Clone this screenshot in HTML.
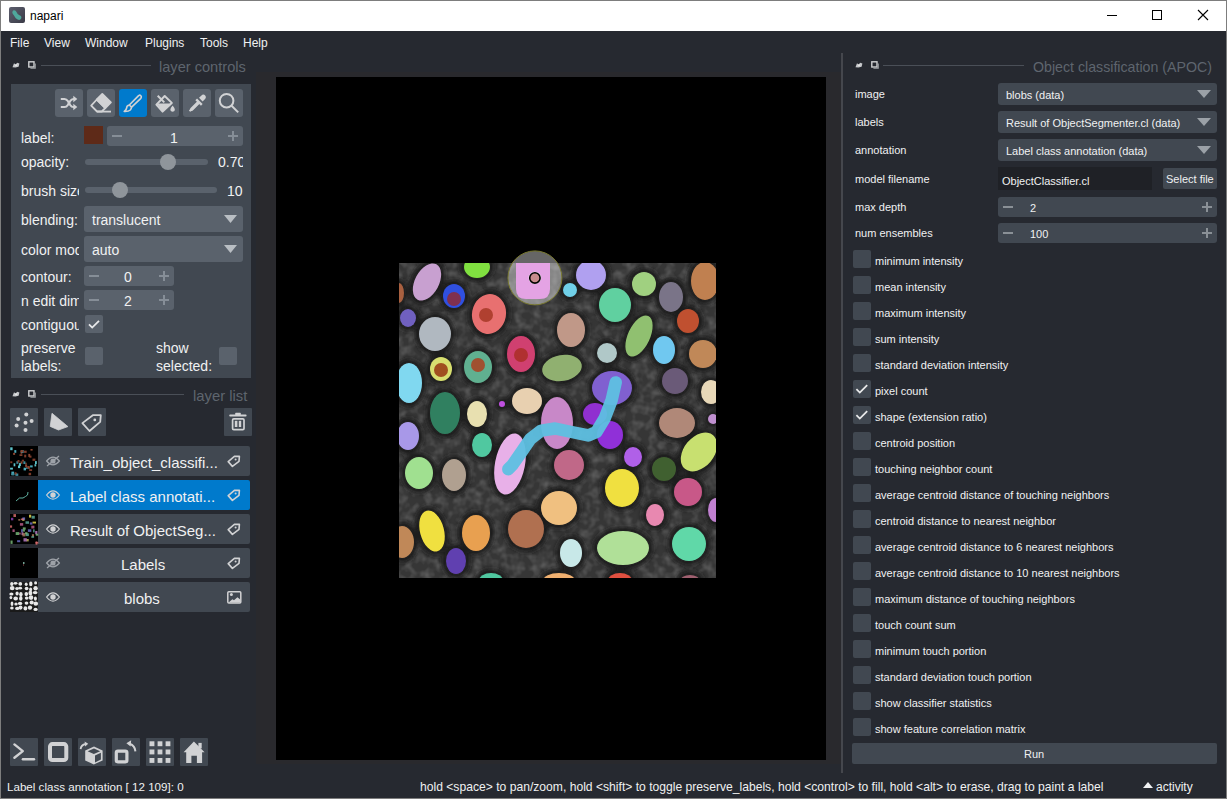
<!DOCTYPE html>
<html><head><meta charset="utf-8">
<style>
*{box-sizing:border-box;margin:0;padding:0}
html,body{width:1227px;height:799px;overflow:hidden;background:#262930;font-family:"Liberation Sans",sans-serif;color:#f0f1f2}
.a{position:absolute}
.t{position:absolute;white-space:pre;line-height:1}
svg{position:absolute;overflow:visible}
.btn{position:absolute;background:#5a626c;border-radius:3px}
.cb{position:absolute;width:18px;height:18px;background:#414851;border-radius:2px}
.sp{position:absolute;background:#5a626c;border-radius:3px}
.fg{background:#414851}
.btn.fg{border-radius:1px}
.lbl{font-size:14px}
.r11{font-size:11px}
</style></head><body>
<!-- window border -->
<div class="a" style="left:0;top:0;width:1227px;height:799px;border:1px solid #7d7d7d"></div>
<!-- title bar -->
<div class="a" style="left:1px;top:1px;width:1225px;height:30px;background:#fff"></div>
<svg style="left:9px;top:7px" width="16" height="16" viewBox="0 0 16 16"><defs><linearGradient id="lg" x1="0" y1="0" x2="1" y2="1"><stop offset="0" stop-color="#5d5f6e"/><stop offset="1" stop-color="#3a3b47"/></linearGradient></defs>
<rect width="16" height="16" rx="2" fill="url(#lg)"/><path d="M4 3.5Q6.5 2.5 7.5 5Q8.3 7.4 10.5 8.2Q13 9.2 12.2 11.6Q11.2 13.6 8.6 12.6Q6.4 11.8 5.6 9.6Q5 8.2 3.8 7Q2.6 5 4 3.5Z" fill="#4fa89c"/></svg>
<div class="t" style="left:30px;top:10px;font-size:12px;color:#000">napari</div>
<div class="a" style="left:1107px;top:15px;width:10px;height:1px;background:#000"></div>
<div class="a" style="left:1152px;top:10px;width:10px;height:10px;border:1px solid #000"></div>
<svg style="left:1198px;top:10px" width="10" height="10"><path d="M0 0L10 10M10 0L0 10" stroke="#000" stroke-width="1.1"/></svg>

<!-- menu -->
<div class="t" style="left:10px;top:37px;font-size:12px">File</div>
<div class="t" style="left:44px;top:37px;font-size:12px">View</div>
<div class="t" style="left:85px;top:37px;font-size:12px">Window</div>
<div class="t" style="left:145px;top:37px;font-size:12px">Plugins</div>
<div class="t" style="left:200px;top:37px;font-size:12px">Tools</div>
<div class="t" style="left:243px;top:37px;font-size:12px">Help</div>

<!-- LEFT DOCK: layer controls title -->
<svg style="left:12px;top:62px" width="8" height="6" viewBox="0 0 8 6"><path d="M0.5 5.2L2 1.2L3.6 2.6L5.2 0.8L7.4 1.6L6.6 4.8L3.4 5.4Z" fill="#c6c8cb"/><circle cx="4" cy="3.2" r="1" fill="#e8e8e8"/></svg>
<svg style="left:28px;top:61px" width="8" height="8" viewBox="0 0 8 8"><rect x="0.8" y="0.8" width="5.2" height="5.2" fill="none" stroke="#cfd0d2" stroke-width="1.4"/><path d="M7.2 2.4V7.2H2.4" fill="none" stroke="#9fa2a6" stroke-width="1.2"/></svg>
<svg style="left:12px;top:391px" width="8" height="6" viewBox="0 0 8 6"><path d="M0.5 5.2L2 1.2L3.6 2.6L5.2 0.8L7.4 1.6L6.6 4.8L3.4 5.4Z" fill="#c6c8cb"/><circle cx="4" cy="3.2" r="1" fill="#e8e8e8"/></svg>
<svg style="left:28px;top:390px" width="8" height="8" viewBox="0 0 8 8"><rect x="0.8" y="0.8" width="5.2" height="5.2" fill="none" stroke="#cfd0d2" stroke-width="1.4"/><path d="M7.2 2.4V7.2H2.4" fill="none" stroke="#9fa2a6" stroke-width="1.2"/></svg>

<div class="a" style="left:41px;top:65px;width:110px;height:1px;background:#4a4f57"></div>
<div class="t" style="left:159px;top:60px;font-size:14.6px;color:#5e656e">layer controls</div>

<!-- layer controls panel -->
<div class="a" style="left:11px;top:84px;width:240px;height:294px;background:#414851"></div>
<div class="btn" style="left:55px;top:89px;width:28px;height:28px"></div>
<div class="btn" style="left:87px;top:89px;width:28px;height:28px"></div>
<div class="btn" style="left:119px;top:89px;width:28px;height:28px;background:#007acc"></div>
<div class="btn" style="left:151px;top:89px;width:28px;height:28px"></div>
<div class="btn" style="left:183px;top:89px;width:28px;height:28px"></div>
<div class="btn" style="left:215px;top:89px;width:28px;height:28px"></div>


<svg style="left:55px;top:89px" width="28" height="28" viewBox="0 0 28 28" fill="none" stroke="#d1d2d4" stroke-width="2.2" stroke-linecap="butt">
<path d="M5.8 10H9.5Q11.5 10 12.8 12L15.2 16Q16.5 18 18.5 18H20.5"/><path d="M5.8 18H9.5Q11.5 18 12.8 16L15.2 12Q16.5 10 18.5 10H20.5"/>
<path d="M18.3 6.8L22.3 10L18.3 13.2Z M18.3 14.8L22.3 18L18.3 21.2Z" fill="#d1d2d4" stroke="none"/></svg>
<svg style="left:87px;top:89px" width="28" height="28" viewBox="0 0 28 28" fill="none" stroke="#d1d2d4" stroke-width="1.8" stroke-linejoin="round">
<path d="M15.3 5L23.9 13.4L18.3 19L9.8 10.5Z" fill="#d1d2d4"/>
<path d="M9.8 10.5L18.3 19L14.8 22.5H10L4.2 16.6Z"/><path d="M10 22.6H24"/></svg>
<svg style="left:119px;top:89px" width="28" height="28" viewBox="0 0 28 28" fill="none" stroke="#d1d2d4" stroke-width="1.6" stroke-linejoin="round">
<path d="M19.6 6.6Q21.5 5.4 22.3 7.6Q22.5 8.6 21.6 9.6L12.6 18.2L10.3 16L19.6 6.6Z"/>
<path d="M10.3 16.2Q7.6 16.4 7.6 19.2Q7.4 21 5.2 22.4Q9.6 22.6 11.3 21Q12.6 19.6 12.4 18.2"/></svg>
<svg style="left:151px;top:89px" width="28" height="28" viewBox="0 0 28 28" fill="none" stroke="#d1d2d4" stroke-width="2" stroke-linejoin="round">
<path d="M6.7 6.8L13.3 13.4"/>
<path d="M13.7 7L20.8 13.9L11.6 22.6L5.4 15.6Z"/>
<path d="M5.6 14.6H20L11.6 22.6Z" fill="#d1d2d4" stroke="none"/>
<path d="M21.6 16.6Q24.2 19.6 23.9 21Q23.4 22.8 21.6 22.8Q19.8 22.8 19.3 21Q19 19.6 21.6 16.6Z" fill="#d1d2d4" stroke="none"/></svg>
<svg style="left:183px;top:89px" width="28" height="28" viewBox="0 0 28 28" fill="none" stroke="#d1d2d4" stroke-width="1.8" stroke-linejoin="round">
<path d="M18.2 6.8Q20.2 4.6 22.2 6.4Q23.8 8.2 21.6 10.4L19.6 12.4L16 8.8Z" fill="#d1d2d4" stroke="none"/>
<path d="M13.2 10.3L18.8 15.9" stroke-width="2.4"/>
<path d="M15.8 13.4L9.2 20L7.4 21.2L6.6 22.2M15.8 13.4" /><path d="M15.2 12.6L8.2 19.6L7.6 21.4L9.2 20.8L16.2 13.8"/></svg>
<svg style="left:215px;top:89px" width="28" height="28" viewBox="0 0 28 28" fill="none" stroke="#d1d2d4" stroke-width="2">
<circle cx="11.6" cy="11.7" r="6.8"/><path d="M16.6 16.8L23.2 23.4"/></svg>


<div class="t lbl" style="left:21px;top:131px">label:</div>
<div class="a" style="left:84px;top:126px;width:19px;height:18px;background:#5e2a18"></div>
<div class="sp" style="left:107px;top:126px;width:136px;height:20px"></div>
<div class="t lbl" style="left:170px;top:131px">1</div>

<div class="t lbl" style="left:21px;top:155px">opacity:</div>
<div class="a" style="left:85px;top:159px;width:123px;height:6px;background:#5a626c;border-radius:3px"></div>
<div class="a" style="left:160px;top:154px;width:16px;height:16px;background:#8f959b;border-radius:50%"></div>
<div class="t lbl" style="left:218px;top:155px;width:25px;overflow:hidden">0.70</div>

<div class="t lbl" style="left:21px;top:184px;width:58px;height:18px;overflow:hidden">brush size:</div>
<div class="a" style="left:85px;top:187px;width:132px;height:6px;background:#5a626c;border-radius:3px"></div>
<div class="a" style="left:112px;top:182px;width:16px;height:16px;background:#8f959b;border-radius:50%"></div>
<div class="t lbl" style="left:227px;top:184px">10</div>

<div class="t lbl" style="left:21px;top:213px">blending:</div>
<div class="sp" style="left:84px;top:206px;width:159px;height:26px"></div>
<div class="t lbl" style="left:92px;top:213px">translucent</div>

<div class="t lbl" style="left:21px;top:243px;width:58px;height:18px;overflow:hidden">color mode:</div>
<div class="sp" style="left:84px;top:236px;width:159px;height:26px"></div>
<div class="t lbl" style="left:92px;top:243px">auto</div>

<div class="t lbl" style="left:21px;top:270px">contour:</div>
<div class="sp" style="left:84px;top:266px;width:90px;height:20px"></div>
<div class="t lbl" style="left:124px;top:270px">0</div>

<div class="t lbl" style="left:21px;top:294px;width:58px;height:18px;overflow:hidden">n edit dim:</div>
<div class="sp" style="left:84px;top:290px;width:90px;height:20px"></div>
<div class="t lbl" style="left:124px;top:294px">2</div>

<div class="t lbl" style="left:21px;top:318px;width:58px;height:18px;overflow:hidden">contiguous:</div>
<div class="sp" style="left:85px;top:315px;width:18px;height:18px;border-radius:2px"></div>

<div class="t lbl" style="left:21px;top:341px">preserve</div>
<div class="t lbl" style="left:21px;top:359px">labels:</div>
<div class="sp" style="left:85px;top:347px;width:18px;height:18px;border-radius:2px"></div>
<div class="t lbl" style="left:156px;top:341px">show</div>
<div class="t lbl" style="left:156px;top:359px">selected:</div>
<div class="sp" style="left:219px;top:347px;width:18px;height:18px;border-radius:2px"></div>

<!-- layer list title -->
<div class="a" style="left:41px;top:394px;width:143px;height:1px;background:#4a4f57"></div>
<div class="t" style="left:193px;top:389px;font-size:14.8px;color:#5e656e">layer list</div>

<div class="btn fg" style="left:10px;top:408px;width:28px;height:28px"></div>
<div class="btn fg" style="left:44px;top:408px;width:28px;height:28px"></div>
<div class="btn fg" style="left:78px;top:408px;width:28px;height:28px"></div>
<div class="btn fg" style="left:224px;top:408px;width:28px;height:28px"></div>

<!-- layer rows -->
<div class="a" style="left:38px;top:446px;width:212px;height:30px;background:#414851;border-radius:0 2px 2px 0"></div>
<div class="a" style="left:38px;top:480px;width:212px;height:30px;background:#007acc;border-radius:0 2px 2px 0"></div>
<div class="a" style="left:38px;top:514px;width:212px;height:30px;background:#414851;border-radius:0 2px 2px 0"></div>
<div class="a" style="left:38px;top:548px;width:212px;height:30px;background:#414851;border-radius:0 2px 2px 0"></div>
<div class="a" style="left:38px;top:582px;width:212px;height:30px;background:#414851;border-radius:0 2px 2px 0"></div>
<svg style="left:10px;top:446px" width="28" height="30" viewBox="0 0 28 30"><rect width="28" height="30" fill="#000"/><rect x="16.2" y="20.8" width="1.5" height="2.2" fill="#3c8a9a"/><rect x="24.5" y="18.2" width="1.7" height="2.2" fill="#5cc0c8"/><rect x="6.4" y="15.2" width="1.9" height="2.6" fill="#3c8a9a"/><rect x="10.6" y="5.1" width="1.7" height="2.7" fill="#8a4530"/><rect x="3.6" y="17.3" width="1.7" height="3.0" fill="#5cc0c8"/><rect x="0.1" y="21.7" width="2.8" height="1.9" fill="#5cc0c8"/><rect x="25.0" y="15.1" width="1.8" height="3.0" fill="#5cc0c8"/><rect x="5.1" y="27.0" width="1.9" height="2.0" fill="#8a4530"/><rect x="4.3" y="4.1" width="2.0" height="2.7" fill="#4aa8b8"/><rect x="15.2" y="16.7" width="1.6" height="2.0" fill="#7a3a2a"/><rect x="8.0" y="19.5" width="2.2" height="2.6" fill="#5cc0c8"/><rect x="1.5" y="27.3" width="2.9" height="2.0" fill="#4aa8b8"/><rect x="10.5" y="15.4" width="2.0" height="2.4" fill="#8a4530"/><rect x="0.2" y="1.3" width="2.4" height="2.9" fill="#5cc0c8"/><rect x="3.1" y="6.9" width="2.0" height="2.0" fill="#8a4530"/><rect x="13.6" y="21.7" width="2.4" height="2.7" fill="#4aa8b8"/><rect x="9.5" y="8.3" width="2.9" height="1.6" fill="#8a4530"/><rect x="8.9" y="17.1" width="2.0" height="2.9" fill="#5cc0c8"/><rect x="14.2" y="8.7" width="2.0" height="2.7" fill="#7a3a2a"/><rect x="16.3" y="20.2" width="3.0" height="1.7" fill="#7a3a2a"/><rect x="1.3" y="27.6" width="2.9" height="1.5" fill="#3c8a9a"/><rect x="19.3" y="9.6" width="2.2" height="2.1" fill="#7a3a2a"/><rect x="1.4" y="25.6" width="2.7" height="2.0" fill="#4aa8b8"/><rect x="5.4" y="27.5" width="2.9" height="2.4" fill="#3c8a9a"/><rect x="20.5" y="3.0" width="2.1" height="1.6" fill="#8a4530"/><rect x="10.9" y="4.0" width="2.8" height="3.0" fill="#3c8a9a"/><rect x="11.8" y="13.7" width="2.2" height="1.9" fill="#7a3a2a"/><rect x="10.5" y="4.1" width="2.7" height="2.3" fill="#8a4530"/><rect x="4.7" y="26.2" width="1.8" height="2.2" fill="#7a3a2a"/><rect x="13.4" y="15.3" width="2.0" height="2.7" fill="#3c8a9a"/><rect x="20.1" y="19.4" width="2.6" height="2.0" fill="#4aa8b8"/><rect x="18.3" y="7.9" width="1.9" height="3.0" fill="#8a4530"/><rect x="18.6" y="26.8" width="2.5" height="2.4" fill="#7a3a2a"/><rect x="0.3" y="15.3" width="2.0" height="1.9" fill="#7a3a2a"/><rect x="7.5" y="14.0" width="2.0" height="2.5" fill="#7a3a2a"/><rect x="19.2" y="23.2" width="2.9" height="1.8" fill="#7a3a2a"/><rect x="22.5" y="12.6" width="2.9" height="2.3" fill="#7a3a2a"/><rect x="13.8" y="4.7" width="2.9" height="2.2" fill="#7a3a2a"/><rect x="18.0" y="20.2" width="1.8" height="2.7" fill="#8a4530"/><rect x="15.1" y="18.6" width="2.0" height="2.3" fill="#8a4530"/></svg>
<svg style="left:10px;top:480px" width="28" height="30" viewBox="0 0 28 30"><rect width="28" height="30" fill="#000"/><path d="M6 21L9.5 18H13L15.5 16.5L17.5 15L18 12" fill="none" stroke="#5fb0a0" stroke-width="1"/></svg>
<svg style="left:10px;top:514px" width="28" height="30" viewBox="0 0 28 30"><rect width="28" height="30" fill="#000"/><rect x="22.5" y="7.6" width="3.5" height="1.9" fill="#f0e050" opacity="0.8"/><rect x="11.5" y="18.2" width="1.9" height="2.9" fill="#c080d0" opacity="0.8"/><rect x="25.6" y="27.4" width="1.8" height="3.3" fill="#e07070" opacity="0.8"/><rect x="8.3" y="5.1" width="1.9" height="1.6" fill="#b08060" opacity="0.8"/><rect x="9.1" y="18.6" width="1.6" height="1.9" fill="#c06090" opacity="0.8"/><rect x="0.0" y="11.4" width="2.1" height="2.3" fill="#e07070" opacity="0.8"/><rect x="17.9" y="15.3" width="3.4" height="2.6" fill="#7070d0" opacity="0.8"/><rect x="2.5" y="15.3" width="2.2" height="2.7" fill="#c06090" opacity="0.8"/><rect x="21.3" y="11.7" width="3.1" height="2.8" fill="#c06090" opacity="0.8"/><rect x="12.2" y="4.4" width="2.3" height="2.5" fill="#d0c060" opacity="0.8"/><rect x="25.2" y="17.0" width="2.2" height="3.3" fill="#c080d0" opacity="0.8"/><rect x="9.9" y="9.1" width="3.3" height="2.6" fill="#c06090" opacity="0.8"/><rect x="16.4" y="25.0" width="2.3" height="2.4" fill="#d0c060" opacity="0.8"/><rect x="12.8" y="13.4" width="2.9" height="2.3" fill="#80c080" opacity="0.8"/><rect x="15.5" y="7.3" width="3.5" height="2.5" fill="#60b0a0" opacity="0.8"/><rect x="0.5" y="26.5" width="2.1" height="3.4" fill="#80c080" opacity="0.8"/><rect x="12.4" y="3.4" width="2.7" height="2.4" fill="#7070d0" opacity="0.8"/><rect x="1.0" y="3.8" width="2.3" height="2.5" fill="#9040c0" opacity="0.8"/><rect x="7.1" y="26.2" width="3.1" height="2.0" fill="#7070d0" opacity="0.8"/><rect x="21.9" y="20.2" width="2.1" height="2.5" fill="#b08060" opacity="0.8"/><rect x="13.5" y="24.2" width="3.3" height="3.3" fill="#c080d0" opacity="0.8"/><rect x="19.8" y="8.4" width="2.6" height="2.2" fill="#7070d0" opacity="0.8"/><rect x="19.0" y="0.7" width="2.2" height="2.9" fill="#f0e050" opacity="0.8"/><rect x="3.4" y="0.1" width="2.6" height="2.9" fill="#e07070" opacity="0.8"/><rect x="23.1" y="15.3" width="1.5" height="3.1" fill="#60b0a0" opacity="0.8"/><rect x="15.5" y="19.3" width="3.4" height="2.8" fill="#60b0a0" opacity="0.8"/><rect x="12.4" y="19.1" width="2.9" height="3.3" fill="#b08060" opacity="0.8"/><rect x="21.6" y="1.8" width="3.2" height="2.9" fill="#60b0a0" opacity="0.8"/><rect x="15.1" y="18.2" width="2.4" height="2.1" fill="#80c080" opacity="0.8"/><rect x="12.4" y="15.4" width="2.5" height="2.2" fill="#80c080" opacity="0.8"/><rect x="11.1" y="15.2" width="1.6" height="3.0" fill="#7070d0" opacity="0.8"/><rect x="21.3" y="22.2" width="2.8" height="1.6" fill="#60b0a0" opacity="0.8"/><rect x="25.4" y="28.0" width="2.9" height="1.6" fill="#e07070" opacity="0.8"/><rect x="5.7" y="18.1" width="3.4" height="2.9" fill="#80c080" opacity="0.8"/><rect x="25.8" y="19.8" width="2.4" height="1.9" fill="#80c080" opacity="0.8"/><rect x="10.8" y="4.5" width="2.7" height="1.6" fill="#e07070" opacity="0.8"/></svg>
<svg style="left:10px;top:548px" width="28" height="30" viewBox="0 0 28 30"><rect width="28" height="30" fill="#000"/><rect x="13" y="14" width="1.5" height="2" fill="#70a090"/><rect x="13" y="16.5" width="1" height="1" fill="#a05050"/></svg>
<svg style="left:10px;top:582px" width="28" height="30" viewBox="0 0 28 30"><rect width="28" height="30" fill="#000"/><rect width="28" height="30" fill="#1a1a1a"/><ellipse cx="1.8" cy="2.0" rx="1.7" ry="2.0" fill="#e8e8e8"/><ellipse cx="5.5" cy="1.3" rx="2.0" ry="1.4" fill="#e8e8e8"/><ellipse cx="10.3" cy="1.9" rx="1.9" ry="1.8" fill="#e8e8e8"/><ellipse cx="16.2" cy="2.3" rx="1.5" ry="1.7" fill="#e8e8e8"/><ellipse cx="20.8" cy="1.9" rx="1.7" ry="2.3" fill="#e8e8e8"/><ellipse cx="25.6" cy="0.9" rx="1.5" ry="1.6" fill="#e8e8e8"/><ellipse cx="2.2" cy="6.1" rx="2.4" ry="2.2" fill="#e8e8e8"/><ellipse cx="7.0" cy="6.4" rx="1.8" ry="1.5" fill="#e8e8e8"/><ellipse cx="10.1" cy="6.2" rx="2.0" ry="1.4" fill="#e8e8e8"/><ellipse cx="16.6" cy="6.5" rx="1.9" ry="1.8" fill="#e8e8e8"/><ellipse cx="20.6" cy="7.4" rx="1.5" ry="1.9" fill="#e8e8e8"/><ellipse cx="25.6" cy="6.3" rx="2.2" ry="2.3" fill="#e8e8e8"/><ellipse cx="1.4" cy="12.1" rx="2.1" ry="1.5" fill="#e8e8e8"/><ellipse cx="7.1" cy="11.5" rx="1.6" ry="2.1" fill="#e8e8e8"/><ellipse cx="10.9" cy="12.2" rx="1.7" ry="2.3" fill="#e8e8e8"/><ellipse cx="16.3" cy="12.1" rx="1.8" ry="2.1" fill="#e8e8e8"/><ellipse cx="20.4" cy="11.1" rx="2.0" ry="2.4" fill="#e8e8e8"/><ellipse cx="25.2" cy="10.6" rx="2.4" ry="1.6" fill="#e8e8e8"/><ellipse cx="0.9" cy="15.6" rx="1.4" ry="1.6" fill="#e8e8e8"/><ellipse cx="5.7" cy="16.5" rx="2.3" ry="2.1" fill="#e8e8e8"/><ellipse cx="10.8" cy="16.4" rx="1.7" ry="2.3" fill="#e8e8e8"/><ellipse cx="16.7" cy="16.1" rx="1.9" ry="1.6" fill="#e8e8e8"/><ellipse cx="21.0" cy="15.6" rx="2.3" ry="2.3" fill="#e8e8e8"/><ellipse cx="25.4" cy="16.6" rx="1.5" ry="2.2" fill="#e8e8e8"/><ellipse cx="2.0" cy="21.8" rx="1.4" ry="2.3" fill="#e8e8e8"/><ellipse cx="6.0" cy="22.0" rx="1.7" ry="1.5" fill="#e8e8e8"/><ellipse cx="10.1" cy="21.4" rx="2.2" ry="1.6" fill="#e8e8e8"/><ellipse cx="16.5" cy="21.1" rx="1.9" ry="1.6" fill="#e8e8e8"/><ellipse cx="21.7" cy="20.6" rx="2.1" ry="2.0" fill="#e8e8e8"/><ellipse cx="25.8" cy="21.7" rx="2.3" ry="2.1" fill="#e8e8e8"/><ellipse cx="1.9" cy="25.9" rx="1.8" ry="1.5" fill="#e8e8e8"/><ellipse cx="7.3" cy="26.4" rx="2.2" ry="1.6" fill="#e8e8e8"/><ellipse cx="10.5" cy="25.6" rx="2.0" ry="2.1" fill="#e8e8e8"/><ellipse cx="15.4" cy="26.4" rx="1.9" ry="2.1" fill="#e8e8e8"/><ellipse cx="20.0" cy="25.6" rx="2.2" ry="2.2" fill="#e8e8e8"/><ellipse cx="25.6" cy="27.4" rx="2.1" ry="1.6" fill="#e8e8e8"/></svg>
<div class="t" style="left:70px;top:455px;font-size:15px">Train_object_classifi...</div>
<div class="t" style="left:70px;top:489px;font-size:15px">Label class annotati...</div>
<div class="t" style="left:70px;top:523px;font-size:15px">Result of ObjectSeg...</div>
<div class="t" style="left:121px;top:557px;font-size:15px">Labels</div>
<div class="t" style="left:124px;top:591px;font-size:15px">blobs</div>

<!-- bottom buttons -->
<div class="btn fg" style="left:10px;top:738px;width:28px;height:28px"></div>
<div class="btn fg" style="left:44px;top:738px;width:28px;height:28px"></div>
<div class="btn fg" style="left:78px;top:738px;width:28px;height:28px"></div>
<div class="btn fg" style="left:112px;top:738px;width:28px;height:28px"></div>
<div class="btn fg" style="left:146px;top:738px;width:28px;height:28px"></div>
<div class="btn fg" style="left:180px;top:738px;width:28px;height:28px"></div>


<!-- layer list button icons -->
<svg style="left:10px;top:408px" width="28" height="28" viewBox="0 0 28 28" fill="#d1d2d4">
<circle cx="16.3" cy="6.6" r="2"/><circle cx="8.2" cy="11" r="2"/><circle cx="21.6" cy="13.1" r="2"/><circle cx="15.5" cy="14.7" r="2"/><circle cx="6.6" cy="17.6" r="2"/><circle cx="15.5" cy="22" r="2"/></svg>
<svg style="left:44px;top:408px" width="28" height="28" viewBox="0 0 28 28"><path d="M8 5.3L23.9 18.6L14.5 22L6.2 18.4Z" fill="#d1d2d4" stroke="#d1d2d4" stroke-width="0.8" stroke-linejoin="round"/></svg>
<svg style="left:78px;top:408px" width="28" height="28" viewBox="0 0 28 28" fill="none" stroke="#d1d2d4" stroke-width="1.8" stroke-linejoin="round">
<path d="M4.4 15.1L14.8 7.2H22.8L22.2 13.9L11.5 23Z"/><circle cx="16.8" cy="11.9" r="1.4" fill="#d1d2d4" stroke="none"/></svg>
<svg style="left:224px;top:408px" width="28" height="28" viewBox="0 0 28 28" fill="#d1d2d4">
<rect x="5.2" y="6.6" width="17.4" height="1.8" rx="0.9"/><rect x="11.2" y="4.8" width="5.6" height="2.4" rx="0.6"/>
<rect x="8.6" y="10.8" width="11.4" height="10.8" rx="1.2" fill="none" stroke="#d1d2d4" stroke-width="1.7"/>
<rect x="10.8" y="12.8" width="2.6" height="6.2"/><rect x="14.8" y="12.8" width="2.4" height="6.2"/></svg>

<!-- bottom buttons icons -->
<svg style="left:10px;top:738px" width="28" height="28" viewBox="0 0 28 28" fill="none" stroke="#d1d2d4" stroke-width="2.4" stroke-linecap="round" stroke-linejoin="round">
<path d="M4.4 6.4L12.8 13.1L4.4 19.8"/><path d="M12.9 21.2H24"/></svg>
<svg style="left:44px;top:738px" width="28" height="28" viewBox="0 0 28 28"><rect x="6" y="6.1" width="16.3" height="16" rx="2.4" fill="none" stroke="#d1d2d4" stroke-width="4"/></svg>
<svg style="left:78px;top:738px" width="28" height="28" viewBox="0 0 28 28">
<path d="M16 8.4L24.6 12.4V22.4L15.8 26.4L7.2 22.4V12.6Z" fill="#d1d2d4"/>
<path d="M16 10.6L22.2 13.2L15.8 16L9.6 13.2Z" fill="#414851"/><path d="M17 17.6L22.9 14.8V21.6L17 24.4Z" fill="#414851"/>
<path d="M2.6 11.2Q3 6.8 7.6 6" fill="none" stroke="#d1d2d4" stroke-width="1.8"/><path d="M6.6 3.6L10.2 5.8L7.2 8.6Z" fill="#d1d2d4"/></svg>
<svg style="left:112px;top:738px" width="28" height="28" viewBox="0 0 28 28">
<rect x="4.3" y="13.2" width="10.6" height="10.6" rx="1.6" fill="none" stroke="#d1d2d4" stroke-width="3.2"/>
<path d="M23.4 13.4Q23 7.6 17.6 5.8" fill="none" stroke="#d1d2d4" stroke-width="2"/><path d="M14.4 5.2L19.2 2.2L18.6 8.4Z" fill="#d1d2d4"/></svg>
<svg style="left:146px;top:738px" width="28" height="28" viewBox="0 0 28 28" fill="#d1d2d4">
<rect x="3.5" y="3.3" width="4.9" height="4.9"/><rect x="11.6" y="3.3" width="4.8" height="4.9"/><rect x="19.6" y="3.3" width="4.8" height="4.9"/>
<rect x="3.5" y="11.5" width="4.9" height="4.9"/><rect x="11.6" y="11.5" width="4.8" height="4.9"/><rect x="19.6" y="11.5" width="4.8" height="4.9"/>
<rect x="3.5" y="20" width="4.9" height="4.9"/><rect x="11.6" y="20" width="4.8" height="4.9"/><rect x="19.6" y="20" width="4.8" height="4.9"/></svg>
<svg style="left:180px;top:738px" width="28" height="28" viewBox="0 0 28 28" fill="#d1d2d4">
<path d="M13.9 3.6L24.6 14.2H22.1V24.9H16.9V17.8H11.4V24.9H6.2V14.2H3.6Z"/><rect x="18.4" y="4.9" width="3.3" height="5.5"/></svg>

<!-- eye / tag icons on rows -->
<svg style="left:45px;top:453px" width="16" height="16" viewBox="0 0 16 16" fill="none" stroke="#9da2a8" stroke-width="1.2">
<path d="M1.6 8Q8 0.2 14.4 8Q8 15.8 1.6 8Z"/><circle cx="8" cy="8" r="2.6" fill="#9da2a8" stroke="none"/><path d="M2 13L14 3"/></svg>
<svg style="left:45px;top:487px" width="16" height="16" viewBox="0 0 16 16" fill="none" stroke="#d1d2d4" stroke-width="1.2">
<path d="M1.6 8Q8 -0.2 14.4 8Q8 16.2 1.6 8Z"/><circle cx="8" cy="8" r="2.7" fill="#d1d2d4" stroke="none"/></svg>
<svg style="left:45px;top:521px" width="16" height="16" viewBox="0 0 16 16" fill="none" stroke="#d1d2d4" stroke-width="1.2">
<path d="M1.6 8Q8 -0.2 14.4 8Q8 16.2 1.6 8Z"/><circle cx="8" cy="8" r="2.7" fill="#d1d2d4" stroke="none"/></svg>
<svg style="left:45px;top:555px" width="16" height="16" viewBox="0 0 16 16" fill="none" stroke="#9da2a8" stroke-width="1.2">
<path d="M1.6 8Q8 0.2 14.4 8Q8 15.8 1.6 8Z"/><circle cx="8" cy="8" r="2.6" fill="#9da2a8" stroke="none"/><path d="M2 13L14 3"/></svg>
<svg style="left:45px;top:589px" width="16" height="16" viewBox="0 0 16 16" fill="none" stroke="#d1d2d4" stroke-width="1.2">
<path d="M1.6 8Q8 -0.2 14.4 8Q8 16.2 1.6 8Z"/><circle cx="8" cy="8" r="2.7" fill="#d1d2d4" stroke="none"/></svg>
<svg style="left:218px;top:446px" width="32" height="32" viewBox="0 0 32 32" fill="none" stroke="#d1d2d4" stroke-width="1.6" stroke-linejoin="round"><path d="M10.2 15.6L16.4 10.4H21.4L21 15.4L14.4 20.4Z"/><circle cx="17.6" cy="13.6" r="1" fill="#d1d2d4" stroke="none"/></svg>
<svg style="left:218px;top:480px" width="32" height="32" viewBox="0 0 32 32" fill="none" stroke="#d1d2d4" stroke-width="1.6" stroke-linejoin="round"><path d="M10.2 15.6L16.4 10.4H21.4L21 15.4L14.4 20.4Z"/><circle cx="17.6" cy="13.6" r="1" fill="#d1d2d4" stroke="none"/></svg>
<svg style="left:218px;top:514px" width="32" height="32" viewBox="0 0 32 32" fill="none" stroke="#d1d2d4" stroke-width="1.6" stroke-linejoin="round"><path d="M10.2 15.6L16.4 10.4H21.4L21 15.4L14.4 20.4Z"/><circle cx="17.6" cy="13.6" r="1" fill="#d1d2d4" stroke="none"/></svg>
<svg style="left:218px;top:548px" width="32" height="32" viewBox="0 0 32 32" fill="none" stroke="#d1d2d4" stroke-width="1.6" stroke-linejoin="round"><path d="M10.2 15.6L16.4 10.4H21.4L21 15.4L14.4 20.4Z"/><circle cx="17.6" cy="13.6" r="1" fill="#d1d2d4" stroke="none"/></svg>
<svg style="left:218px;top:582px" width="32" height="32" viewBox="0 0 32 32"><rect x="9.8" y="9.8" width="13" height="11.2" rx="1" fill="none" stroke="#d1d2d4" stroke-width="1.5"/><circle cx="13.4" cy="12.6" r="1.5" fill="#d1d2d4"/><path d="M10.6 20.4L14.4 17.2L16 18.2L19.4 15.2L22.2 17.4V20.4Z" fill="#d1d2d4"/></svg>
<!-- status -->
<div class="t" style="left:7px;top:781px;font-size:11.6px">Label class annotation [ 12 109]: 0</div>
<div class="t" style="left:420px;top:781px;font-size:12.14px">hold &lt;space&gt; to pan/zoom, hold &lt;shift&gt; to toggle preserve_labels, hold &lt;control&gt; to fill, hold &lt;alt&gt; to erase, drag to paint a label</div>
<div class="t" style="left:1156px;top:781px;font-size:12px">activity</div>

<!-- canvas -->
<div class="a" style="left:256px;top:72px;width:585px;height:692px;background:#29292d"></div>
<div class="a" id="canvas" style="left:276px;top:77px;width:550px;height:683px;background:#000"></div>

<!--BLOBS--><svg style="left:399px;top:263px" width="317" height="315" viewBox="0 0 317 315">
<defs><clipPath id="ic"><rect width="317" height="315"/></clipPath><filter id="bl" x="-50%" y="-50%" width="200%" height="200%"><feGaussianBlur stdDeviation="2.5"/></filter><filter id="tx" x="0" y="0" width="100%" height="100%"><feTurbulence type="fractalNoise" baseFrequency="0.12" numOctaves="2" seed="7"/><feColorMatrix type="matrix" values="0 0 0 0 0.25 0 0 0 0 0.25 0 0 0 0 0.25 0 0 0 0.9 -0.35"/></filter></defs>
<g clip-path="url(#ic)">
<rect width="317" height="315" fill="#363636"/>
<rect width="317" height="315" fill="#000" filter="url(#tx)"/>
<g filter="url(#bl)" fill="#1a1a1a">
<ellipse cx="28" cy="19" rx="16" ry="24" transform="rotate(28 28 19)"/>
<ellipse cx="0" cy="30" rx="9" ry="14"/>
<ellipse cx="78" cy="4" rx="17" ry="15"/>
<ellipse cx="55" cy="33" rx="15" ry="16"/>
<ellipse cx="9" cy="55" rx="12" ry="13"/>
<ellipse cx="90" cy="51" rx="21" ry="24" transform="rotate(10 90 51)"/>
<ellipse cx="36" cy="71" rx="20" ry="21"/>
<ellipse cx="122" cy="91" rx="18" ry="22"/>
<ellipse cx="42" cy="106" rx="15" ry="16"/>
<ellipse cx="79" cy="104" rx="18" ry="20"/>
<ellipse cx="10" cy="120" rx="17" ry="24"/>
<ellipse cx="163" cy="105" rx="24" ry="17" transform="rotate(-10 163 105)"/>
<ellipse cx="46" cy="150" rx="19" ry="25"/>
<ellipse cx="78" cy="151" rx="14" ry="17"/>
<ellipse cx="103" cy="141" rx="7" ry="7"/>
<ellipse cx="128" cy="138" rx="19" ry="17"/>
<ellipse cx="158" cy="160" rx="20" ry="30"/>
<ellipse cx="192" cy="12" rx="19" ry="19"/>
<ellipse cx="171" cy="27" rx="11" ry="11"/>
<ellipse cx="216" cy="42" rx="20" ry="21"/>
<ellipse cx="245" cy="21" rx="16" ry="16"/>
<ellipse cx="272" cy="34" rx="16" ry="19"/>
<ellipse cx="306" cy="18" rx="18" ry="23"/>
<ellipse cx="289" cy="58" rx="15" ry="16"/>
<ellipse cx="172" cy="67" rx="18" ry="21"/>
<ellipse cx="240" cy="73" rx="15" ry="26" transform="rotate(25 240 73)"/>
<ellipse cx="208" cy="90" rx="14" ry="14"/>
<ellipse cx="265" cy="87" rx="15" ry="18"/>
<ellipse cx="304" cy="91" rx="18" ry="18"/>
<ellipse cx="213" cy="125" rx="24" ry="21"/>
<ellipse cx="276" cy="118" rx="17" ry="17"/>
<ellipse cx="312" cy="129" rx="14" ry="16"/>
<ellipse cx="278" cy="160" rx="22" ry="19"/>
<ellipse cx="314" cy="156" rx="9" ry="9"/>
<ellipse cx="9" cy="173" rx="15" ry="18"/>
<ellipse cx="83" cy="182" rx="14" ry="16"/>
<ellipse cx="111" cy="201" rx="19" ry="35" transform="rotate(11 111 201)"/>
<ellipse cx="20" cy="210" rx="18" ry="20"/>
<ellipse cx="55" cy="212" rx="16" ry="20"/>
<ellipse cx="33" cy="268" rx="16" ry="25" transform="rotate(-15 33 268)"/>
<ellipse cx="77" cy="270" rx="18" ry="22"/>
<ellipse cx="127" cy="266" rx="22" ry="23"/>
<ellipse cx="160" cy="245" rx="22" ry="21"/>
<ellipse cx="3" cy="279" rx="16" ry="20"/>
<ellipse cx="57" cy="298" rx="14" ry="17"/>
<ellipse cx="92" cy="318" rx="16" ry="12"/>
<ellipse cx="160" cy="318" rx="20" ry="12"/>
<ellipse cx="196" cy="151" rx="16" ry="15"/>
<ellipse cx="211" cy="172" rx="17" ry="18"/>
<ellipse cx="234" cy="194" rx="13" ry="14"/>
<ellipse cx="170" cy="202" rx="19" ry="19"/>
<ellipse cx="223" cy="225" rx="21" ry="23"/>
<ellipse cx="265" cy="206" rx="16" ry="16"/>
<ellipse cx="300" cy="189" rx="19" ry="26" transform="rotate(40 300 189)"/>
<ellipse cx="289" cy="229" rx="18" ry="18"/>
<ellipse cx="256" cy="252" rx="13" ry="15"/>
<ellipse cx="317" cy="247" rx="12" ry="16"/>
<ellipse cx="224" cy="285" rx="30" ry="21"/>
<ellipse cx="290" cy="281" rx="21" ry="21"/>
<ellipse cx="172" cy="290" rx="15" ry="18"/>
<ellipse cx="221" cy="318" rx="16" ry="12"/>
<ellipse cx="291" cy="318" rx="14" ry="10"/>
</g>
<ellipse cx="28" cy="19" rx="12" ry="20" fill="#c8a0d0" transform="rotate(28 28 19)"/>
<ellipse cx="0" cy="30" rx="5" ry="10" fill="#a86040"/>
<ellipse cx="78" cy="4" rx="13" ry="11" fill="#80e040"/>
<ellipse cx="55" cy="33" rx="11" ry="12" fill="#3050e0"/>
<circle cx="55" cy="36" r="7" fill="#803050"/>
<ellipse cx="9" cy="55" rx="8" ry="9" fill="#7060c0"/>
<ellipse cx="90" cy="51" rx="17" ry="20" fill="#e87070" transform="rotate(10 90 51)"/>
<circle cx="87" cy="52" r="7" fill="#b04030"/>
<ellipse cx="36" cy="71" rx="16" ry="17" fill="#b0b8c0"/>
<ellipse cx="122" cy="91" rx="14" ry="18" fill="#d04070"/>
<circle cx="122" cy="92" r="7" fill="#b03030"/>
<ellipse cx="42" cy="106" rx="11" ry="12" fill="#d8e070"/>
<circle cx="42" cy="107" r="7" fill="#a05020"/>
<ellipse cx="79" cy="104" rx="14" ry="16" fill="#60b090"/>
<circle cx="79" cy="102" r="7" fill="#a05030"/>
<ellipse cx="10" cy="120" rx="13" ry="20" fill="#80d8f0"/>
<ellipse cx="163" cy="105" rx="20" ry="13" fill="#90b070" transform="rotate(-10 163 105)"/>
<ellipse cx="46" cy="150" rx="15" ry="21" fill="#308060"/>
<ellipse cx="78" cy="151" rx="10" ry="13" fill="#e8e0b0"/>
<ellipse cx="103" cy="141" rx="3" ry="3" fill="#c050e0"/>
<ellipse cx="128" cy="138" rx="15" ry="13" fill="#e8d0b0"/>
<ellipse cx="158" cy="160" rx="16" ry="26" fill="#c888c8"/>
<ellipse cx="192" cy="12" rx="15" ry="15" fill="#b0a0f0"/>
<ellipse cx="171" cy="27" rx="7" ry="7" fill="#70d0e8"/>
<ellipse cx="216" cy="42" rx="16" ry="17" fill="#60d0a0"/>
<ellipse cx="245" cy="21" rx="12" ry="12" fill="#a0d080"/>
<ellipse cx="272" cy="34" rx="12" ry="15" fill="#7a7488"/>
<ellipse cx="306" cy="18" rx="14" ry="19" fill="#c08050"/>
<ellipse cx="289" cy="58" rx="11" ry="12" fill="#c05030"/>
<ellipse cx="172" cy="67" rx="14" ry="17" fill="#c09888"/>
<ellipse cx="240" cy="73" rx="11" ry="22" fill="#90c070" transform="rotate(25 240 73)"/>
<ellipse cx="208" cy="90" rx="10" ry="10" fill="#b0c8c8"/>
<ellipse cx="265" cy="87" rx="11" ry="14" fill="#70c8f0"/>
<ellipse cx="304" cy="91" rx="14" ry="14" fill="#c08858"/>
<ellipse cx="213" cy="125" rx="20" ry="17" fill="#8060d0"/>
<ellipse cx="276" cy="118" rx="13" ry="13" fill="#6a5a78"/>
<ellipse cx="312" cy="129" rx="10" ry="12" fill="#e8d8b8"/>
<ellipse cx="278" cy="160" rx="18" ry="15" fill="#b08878"/>
<ellipse cx="314" cy="156" rx="5" ry="5" fill="#c090d0"/>
<ellipse cx="9" cy="173" rx="11" ry="14" fill="#a898e8"/>
<ellipse cx="83" cy="182" rx="10" ry="12" fill="#50c8a0"/>
<ellipse cx="111" cy="201" rx="15" ry="31" fill="#e8b0e8" transform="rotate(11 111 201)"/>
<ellipse cx="20" cy="210" rx="14" ry="16" fill="#a0e090"/>
<ellipse cx="55" cy="212" rx="12" ry="16" fill="#b0a090"/>
<ellipse cx="33" cy="268" rx="12" ry="21" fill="#f0e040" transform="rotate(-15 33 268)"/>
<ellipse cx="77" cy="270" rx="14" ry="18" fill="#e8a050"/>
<ellipse cx="127" cy="266" rx="18" ry="19" fill="#b07050"/>
<ellipse cx="160" cy="245" rx="18" ry="17" fill="#f0c080"/>
<ellipse cx="3" cy="279" rx="12" ry="16" fill="#c08858"/>
<ellipse cx="57" cy="298" rx="10" ry="13" fill="#6040b0"/>
<ellipse cx="92" cy="318" rx="12" ry="8" fill="#50c8a0"/>
<ellipse cx="160" cy="318" rx="16" ry="8" fill="#f0b070"/>
<ellipse cx="196" cy="151" rx="12" ry="11" fill="#9030d0"/>
<ellipse cx="211" cy="172" rx="13" ry="14" fill="#9030d8"/>
<ellipse cx="234" cy="194" rx="9" ry="10" fill="#b060e8"/>
<ellipse cx="170" cy="202" rx="15" ry="15" fill="#c06888"/>
<ellipse cx="223" cy="225" rx="17" ry="19" fill="#f0e040"/>
<ellipse cx="265" cy="206" rx="12" ry="12" fill="#406030"/>
<ellipse cx="300" cy="189" rx="15" ry="22" fill="#c8e070" transform="rotate(40 300 189)"/>
<ellipse cx="289" cy="229" rx="14" ry="14" fill="#c85888"/>
<ellipse cx="256" cy="252" rx="9" ry="11" fill="#e888b0"/>
<ellipse cx="317" cy="247" rx="8" ry="12" fill="#c080d0"/>
<ellipse cx="224" cy="285" rx="26" ry="17" fill="#b0e098"/>
<ellipse cx="290" cy="281" rx="17" ry="17" fill="#60d8a8"/>
<ellipse cx="172" cy="290" rx="11" ry="14" fill="#c8e8e8"/>
<ellipse cx="221" cy="318" rx="12" ry="8" fill="#e05040"/>
<ellipse cx="291" cy="318" rx="10" ry="6" fill="#a06070"/>
<path d="M216.7 119.4 L212.6 137.3 L205.7 155.2 L197.4 169.0 L189.2 172.4 L172.6 169.0 L156.1 165.5 L142.3 167.6 L131.3 175.9 L123.0 188.3 L113.4 202.0 L109.3 206.2" fill="none" stroke="#5ec0e2" stroke-width="12.5" stroke-linecap="round" stroke-linejoin="round" opacity="0.95"/>
<path d="M117 -2H151V26Q151 36 141 36H127Q117 36 117 26Z" fill="#d266d2"/>
</g>
<circle cx="135.9" cy="14.9" r="27" fill="#fff" fill-opacity="0.4" stroke="#7a7a30" stroke-width="1"/>
<circle cx="135.9" cy="14.9" r="6.2" fill="#fff"/>
<circle cx="135.9" cy="14.9" r="5.2" fill="#c88c8c" stroke="#000" stroke-width="1.6"/>
</svg><!--/BLOBS-->
<!-- RIGHT DOCK -->
<svg style="left:855px;top:62px" width="8" height="6" viewBox="0 0 8 6"><path d="M0.5 5.2L2 1.2L3.6 2.6L5.2 0.8L7.4 1.6L6.6 4.8L3.4 5.4Z" fill="#c6c8cb"/><circle cx="4" cy="3.2" r="1" fill="#e8e8e8"/></svg>
<svg style="left:871px;top:61px" width="8" height="8" viewBox="0 0 8 8"><rect x="0.8" y="0.8" width="5.2" height="5.2" fill="none" stroke="#cfd0d2" stroke-width="1.4"/><path d="M7.2 2.4V7.2H2.4" fill="none" stroke="#9fa2a6" stroke-width="1.2"/></svg>

<div class="a" style="left:841px;top:53px;width:2px;height:720px;background:#45474d"></div>
<div class="a" style="left:883px;top:65px;width:141px;height:1px;background:#4a4f57"></div>
<div class="t" style="left:1033px;top:60px;font-size:14.2px;color:#5e656e">Object classification (APOC)</div>

<svg style="left:85px;top:315px" width="18" height="18" viewBox="0 0 18 18"><path d="M4 9.4L7.2 12.6L14 5.8" fill="none" stroke="#e8e9ea" stroke-width="1.8"/></svg>
<div class="t r11" style="left:855px;top:89px">image</div>
<div class="t r11" style="left:855px;top:117px">labels</div>
<div class="t r11" style="left:855px;top:145px">annotation</div>
<div class="t r11" style="left:855px;top:174px">model filename</div>
<div class="t r11" style="left:855px;top:202px">max depth</div>
<div class="t r11" style="left:855px;top:228px">num ensembles</div>
<div class="sp fg" style="left:998px;top:83px;width:219px;height:22px"></div>
<div class="t r11" style="left:1006px;top:90px">blobs (data)</div>
<svg style="left:1197px;top:90px" width="14" height="8"><path d="M0 0H14L7 8Z" fill="#9ba1a7"/></svg>
<div class="sp fg" style="left:998px;top:111px;width:219px;height:22px"></div>
<div class="t r11" style="left:1006px;top:118px">Result of ObjectSegmenter.cl (data)</div>
<svg style="left:1197px;top:118px" width="14" height="8"><path d="M0 0H14L7 8Z" fill="#9ba1a7"/></svg>
<div class="sp fg" style="left:998px;top:139px;width:219px;height:22px"></div>
<div class="t r11" style="left:1006px;top:146px">Label class annotation (data)</div>
<svg style="left:1197px;top:146px" width="14" height="8"><path d="M0 0H14L7 8Z" fill="#9ba1a7"/></svg>
<div class="a" style="left:998px;top:167px;width:154px;height:23px;background:#1f2126"></div>
<div class="t r11" style="left:1002px;top:176px">ObjectClassifier.cl</div>
<div class="sp fg" style="left:1163px;top:168px;width:54px;height:21px;border-radius:2px"></div>
<div class="t r11" style="left:1166px;top:174px">Select file</div>
<div class="sp fg" style="left:998px;top:197px;width:219px;height:20px"></div>
<div class="t r11" style="left:1030px;top:203px">2</div>
<div class="a" style="left:1003px;top:206px;width:10px;height:2px;background:#8a9096"></div>
<div class="a" style="left:1202px;top:206px;width:10px;height:2px;background:#8a9096"></div>
<div class="a" style="left:1206px;top:202px;width:2px;height:10px;background:#8a9096"></div>
<div class="sp fg" style="left:998px;top:223px;width:219px;height:20px"></div>
<div class="t r11" style="left:1030px;top:229px">100</div>
<div class="a" style="left:1003px;top:232px;width:10px;height:2px;background:#8a9096"></div>
<div class="a" style="left:1202px;top:232px;width:10px;height:2px;background:#8a9096"></div>
<div class="a" style="left:1206px;top:228px;width:2px;height:10px;background:#8a9096"></div>
<div class="cb" style="left:853px;top:250px"></div>
<div class="t r11" style="left:875px;top:256px">minimum intensity</div>
<div class="cb" style="left:853px;top:276px"></div>
<div class="t r11" style="left:875px;top:282px">mean intensity</div>
<div class="cb" style="left:853px;top:302px"></div>
<div class="t r11" style="left:875px;top:308px">maximum intensity</div>
<div class="cb" style="left:853px;top:328px"></div>
<div class="t r11" style="left:875px;top:334px">sum intensity</div>
<div class="cb" style="left:853px;top:354px"></div>
<div class="t r11" style="left:875px;top:360px">standard deviation intensity</div>
<div class="cb" style="left:853px;top:380px"></div>
<div class="t r11" style="left:875px;top:386px">pixel count</div>
<svg style="left:853px;top:380px" width="18" height="18" viewBox="0 0 18 18"><path d="M3.4 9.2L6.8 12.6L14.2 5.2" fill="none" stroke="#e8e9ea" stroke-width="1.8"/></svg>
<div class="cb" style="left:853px;top:406px"></div>
<div class="t r11" style="left:875px;top:412px">shape (extension ratio)</div>
<svg style="left:853px;top:406px" width="18" height="18" viewBox="0 0 18 18"><path d="M3.4 9.2L6.8 12.6L14.2 5.2" fill="none" stroke="#e8e9ea" stroke-width="1.8"/></svg>
<div class="cb" style="left:853px;top:432px"></div>
<div class="t r11" style="left:875px;top:438px">centroid position</div>
<div class="cb" style="left:853px;top:458px"></div>
<div class="t r11" style="left:875px;top:464px">touching neighbor count</div>
<div class="cb" style="left:853px;top:484px"></div>
<div class="t r11" style="left:875px;top:490px">average centroid distance of touching neighbors</div>
<div class="cb" style="left:853px;top:510px"></div>
<div class="t r11" style="left:875px;top:516px">centroid distance to nearest neighbor</div>
<div class="cb" style="left:853px;top:536px"></div>
<div class="t r11" style="left:875px;top:542px">average centroid distance to 6 nearest neighbors</div>
<div class="cb" style="left:853px;top:562px"></div>
<div class="t r11" style="left:875px;top:568px">average centroid distance to 10 nearest neighbors</div>
<div class="cb" style="left:853px;top:588px"></div>
<div class="t r11" style="left:875px;top:594px">maximum distance of touching neighbors</div>
<div class="cb" style="left:853px;top:614px"></div>
<div class="t r11" style="left:875px;top:620px">touch count sum</div>
<div class="cb" style="left:853px;top:640px"></div>
<div class="t r11" style="left:875px;top:646px">minimum touch portion</div>
<div class="cb" style="left:853px;top:666px"></div>
<div class="t r11" style="left:875px;top:672px">standard deviation touch portion</div>
<div class="cb" style="left:853px;top:692px"></div>
<div class="t r11" style="left:875px;top:698px">show classifier statistics</div>
<div class="cb" style="left:853px;top:718px"></div>
<div class="t r11" style="left:875px;top:724px">show feature correlation matrix</div>
<div class="sp fg" style="left:852px;top:743px;width:365px;height:21px;border-radius:2px"></div>
<div class="t r11" style="left:1024px;top:749px">Run</div>
<svg style="left:1143px;top:782px" width="10" height="6"><path d="M0 6H10L5 0Z" fill="#f0f1f2"/></svg>
<div class="a" style="left:112px;top:135px;width:10px;height:2px;background:#868e97"></div>
<div class="a" style="left:228px;top:135px;width:10px;height:2px;background:#868e97"></div>
<div class="a" style="left:232px;top:131px;width:2px;height:10px;background:#868e97"></div>
<div class="a" style="left:89px;top:275px;width:10px;height:2px;background:#868e97"></div>
<div class="a" style="left:159px;top:275px;width:10px;height:2px;background:#868e97"></div>
<div class="a" style="left:163px;top:271px;width:2px;height:10px;background:#868e97"></div>
<div class="a" style="left:89px;top:299px;width:10px;height:2px;background:#868e97"></div>
<div class="a" style="left:159px;top:299px;width:10px;height:2px;background:#868e97"></div>
<div class="a" style="left:163px;top:295px;width:2px;height:10px;background:#868e97"></div>
<svg style="left:224px;top:215px" width="13" height="8"><path d="M0 0H13L6.5 8Z" fill="#b9bec3"/></svg>
<svg style="left:224px;top:245px" width="13" height="8"><path d="M0 0H13L6.5 8Z" fill="#b9bec3"/></svg>
</body></html>
